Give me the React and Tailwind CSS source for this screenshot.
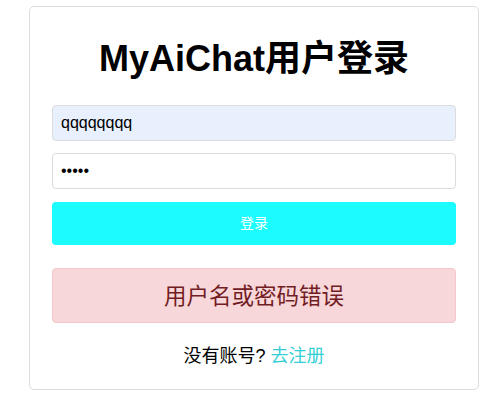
export default function App() {
    return (
        <div className="min-h-[396px] bg-white font-['Liberation_Sans','Noto_Sans_CJK_SC',sans-serif]">
            <div className="ml-[29px] mt-[6px] w-[450px] rounded-[5px] border border-[#dddddd] px-[22px] pt-[32px] pb-[21px]">
                <h1 className="mb-[26px] text-center text-[36px] font-bold leading-[40px] text-black">
                    MyAiChat用户登录
                </h1>

                <input
                    type="text"
                    readOnly
                    value="qqqqqqqq"
                    className="block h-[36px] w-full rounded-[4px] border border-[#dcdcdc] bg-[#e8f0fe] pl-[8px] text-[16px] text-black outline-none"
                />
                <input
                    type="password"
                    readOnly
                    value="12345"
                    className="mt-[12px] block h-[36px] w-full rounded-[4px] border border-[#dcdcdc] bg-white pl-[8px] text-[16px] text-black outline-none"
                />
                <button className="mt-[13px] block h-[43px] w-full rounded-[4px] bg-[#1afcff] text-[14px] text-white">
                    登录
                </button>

                <div className="mt-[23px] flex h-[55px] items-center justify-center rounded-[4px] border border-[#f5c6cb] bg-[#f8d7da] pt-[2px] text-[22.5px] text-[#721c24]">
                    用户名或密码错误
                </div>

                <p className="mt-[21px] text-center text-[18px] leading-[24px] text-black">
                    没有账号? <a className="text-[#34cfd4]">去注册</a>
                </p>
            </div>
        </div>
    );
}
